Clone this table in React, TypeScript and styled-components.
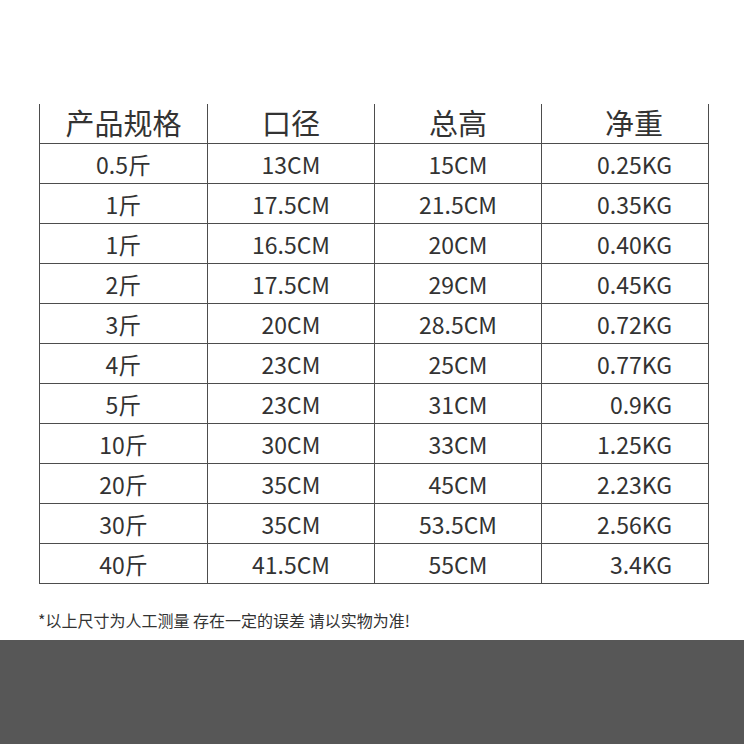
import React from "react";
import styled, { createGlobalStyle } from "styled-components";

const Global = createGlobalStyle`
  html, body { margin: 0; padding: 0; background: #ffffff; }
  body { font-family: "Noto Sans CJK SC", "Noto Sans", sans-serif; }
`;

const Page = styled.div`
  width: 744px;
  height: 744px;
  display: flex;
  flex-direction: column;
  background: #ffffff;
  overflow: hidden;
`;

const Sheet = styled.div`
  flex: 1;
  padding: 104px 0 0 39px;
  display: flex;
  flex-direction: column;
`;

const Table = styled.div`
  display: grid;
  grid-template-columns: 168px 167px 167px 167px;
  width: 670px;
  border-left: 1.5px solid #4d4d4d;
  box-sizing: border-box;
`;

const Cell = styled.div<{ $head?: boolean; $last?: boolean }>`
  height: 40px;
  box-sizing: border-box;
  border-right: 1.5px solid #4d4d4d;
  border-bottom: 1.5px solid #4d4d4d;
  display: flex;
  align-items: center;
  justify-content: ${(p) => (p.$last && !p.$head ? "flex-end" : "center")};
  padding-top: ${(p) => (p.$head ? "0" : "2px")};
  padding-bottom: ${(p) => (p.$head ? "2px" : "0")};
  padding-right: ${(p) => (p.$last && !p.$head ? "36px" : "0")};
  padding-left: ${(p) => (p.$last && p.$head ? "18px" : "0")};
  font-family: "Noto Sans CJK SC", "Noto Sans", sans-serif;
  font-size: ${(p) => (p.$head ? "29px" : "23px")};
  color: #333333;
  line-height: 1;
  white-space: nowrap;
`;

const Note = styled.div`
  margin-top: 26px;
  font-family: "Noto Sans CJK SC", sans-serif;
  font-size: 16px;
  line-height: 20px;
  color: #333333;
  margin-left: -1px;
`;

const Band = styled.div`
  height: 104px;
  background: #575757;
`;

const headers = ["产品规格", "口径", "总高", "净重"];
const rows: string[][] = [
  ["0.5斤", "13CM", "15CM", "0.25KG"],
  ["1斤", "17.5CM", "21.5CM", "0.35KG"],
  ["1斤", "16.5CM", "20CM", "0.40KG"],
  ["2斤", "17.5CM", "29CM", "0.45KG"],
  ["3斤", "20CM", "28.5CM", "0.72KG"],
  ["4斤", "23CM", "25CM", "0.77KG"],
  ["5斤", "23CM", "31CM", "0.9KG"],
  ["10斤", "30CM", "33CM", "1.25KG"],
  ["20斤", "35CM", "45CM", "2.23KG"],
  ["30斤", "35CM", "53.5CM", "2.56KG"],
  ["40斤", "41.5CM", "55CM", "3.4KG"],
];

export default function App() {
  return (
    <Page>
      <Global />
      <Sheet>
        <Table>
          {headers.map((h, i) => (
            <Cell key={h} $head $last={i === 3}>
              {h}
            </Cell>
          ))}
          {rows.map((r, ri) =>
            r.map((v, ci) => (
              <Cell key={`${ri}-${ci}`} $last={ci === 3}>
                {v}
              </Cell>
            ))
          )}
        </Table>
        <Note>*以上尺寸为人工测量 存在一定的误差 请以实物为准!</Note>
      </Sheet>
      <Band />
    </Page>
  );
}
